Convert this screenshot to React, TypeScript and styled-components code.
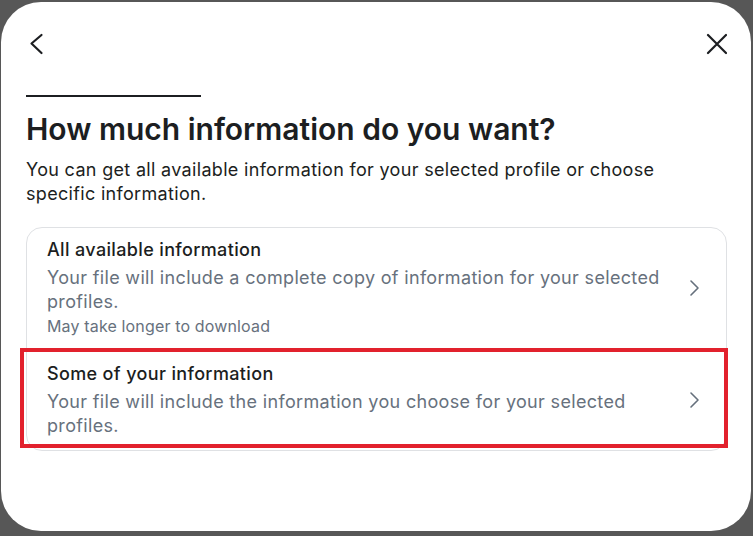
import React from "react";
import styled, { createGlobalStyle } from "styled-components";

const GlobalStyle = createGlobalStyle`
  html, body {
    margin: 0;
    padding: 0;
    background: #575757;
  }
  body {
    font-family: Inter, "Noto Sans", "Liberation Sans", sans-serif;
    -webkit-font-smoothing: antialiased;
  }
`;

interface Choice {
  id: string;
  title: string;
  description: string;
  note?: string;
  highlighted?: boolean;
}

const choices: Choice[] = [
  {
    id: "all",
    title: "All available information",
    description: "Your file will include a complete copy of information for your selected profiles.",
    note: "May take longer to download",
  },
  {
    id: "some",
    title: "Some of your information",
    description: "Your file will include the information you choose for your selected profiles.",
    highlighted: true,
  },
];

const ChevronLeft = () => (
  <svg width="24" height="24" viewBox="0 0 24 24" fill="none">
    <path d="M15.5 4 5.5 12.5l10 9.5" stroke="#1c1e21" strokeWidth="2.2" strokeLinecap="round" strokeLinejoin="round" />
  </svg>
);

const CloseIcon = () => (
  <svg width="24" height="24" viewBox="0 0 24 24" fill="none">
    <path d="M5 4l18 18M23 4 5 22" stroke="#1c1e21" strokeWidth="2.2" strokeLinecap="round" />
  </svg>
);

const ChevronRight = () => (
  <svg width="12" height="18" viewBox="0 0 12 18" fill="none">
    <path d="M3 2l7 7-7 7" stroke="#65707c" strokeWidth="1.6" strokeLinecap="round" strokeLinejoin="round" />
  </svg>
);

function App() {
  return (
    <Style.Backdrop>
      <GlobalStyle />
      <Style.Modal>
        <Style.Header>
          <Style.IconButton aria-label="Back">
            <ChevronLeft />
          </Style.IconButton>
          <Style.IconButton aria-label="Close">
            <CloseIcon />
          </Style.IconButton>
        </Style.Header>

        <Style.Rule />
        <Style.Title>How much information do you want?</Style.Title>
        <Style.Lead>
          You can get all available information for your selected profile or choose specific information.
        </Style.Lead>

        <Style.Card>
          {choices.map((choice) => (
            <Style.Option key={choice.id}>
              <Style.OptionText>
                <Style.OptionTitle>{choice.title}</Style.OptionTitle>
                <Style.OptionDesc>{choice.description}</Style.OptionDesc>
                {choice.note && <Style.OptionNote>{choice.note}</Style.OptionNote>}
              </Style.OptionText>
              <Style.Chevron>
                <ChevronRight />
              </Style.Chevron>
              {choice.highlighted && <Style.Highlight />}
            </Style.Option>
          ))}
        </Style.Card>
      </Style.Modal>
    </Style.Backdrop>
  );
}

const Style = {
  Backdrop: styled.div`
    width: 753px;
    height: 536px;
    box-sizing: border-box;
    padding: 2px 2px 5px 1px;
  `,
  Modal: styled.div`
    height: 100%;
    box-sizing: border-box;
    background: #ffffff;
    border-radius: 40px;
    padding: 29px 24px 0 25px;
    display: flex;
    flex-direction: column;
  `,
  Header: styled.div`
    display: flex;
    justify-content: space-between;
    align-items: center;
    height: 24px;
  `,
  IconButton: styled.button`
    border: none;
    background: none;
    padding: 0;
    width: 24px;
    height: 24px;
    display: flex;
    align-items: center;
    justify-content: center;
    cursor: pointer;
  `,
  Rule: styled.div`
    width: 175px;
    height: 2px;
    background: #1c1e21;
    margin-top: 40px;
  `,
  Title: styled.h1`
    margin: 14px 0 0;
    font-size: 30px;
    line-height: 36px;
    font-weight: 600;
    color: #1c1e21;
  `,
  Lead: styled.p`
    margin: 11px 0 0;
    font-size: 18px;
    line-height: 24px;
    letter-spacing: 0.32px;
    color: #1c1e21;
    max-width: 680px;
  `,
  Card: styled.div`
    margin-top: 21px;
    border: 1px solid #dfe1e4;
    border-radius: 16px;
    display: flex;
    flex-direction: column;
    gap: 2px;
  `,
  Option: styled.div`
    position: relative;
    display: flex;
    align-items: center;
    padding: 10px 20px 12px 20px;
    cursor: pointer;
  `,
  OptionText: styled.div`
    flex: 1;
    display: flex;
    flex-direction: column;
  `,
  OptionTitle: styled.div`
    font-size: 18px;
    line-height: 24px;
    font-weight: 500;
    letter-spacing: 0.35px;
    color: #1c1e21;
    margin-bottom: 4px;
  `,
  OptionDesc: styled.div`
    font-size: 18px;
    line-height: 24px;
    letter-spacing: 0.33px;
    color: #67717d;
    max-width: 625px;
  `,
  OptionNote: styled.div`
    font-size: 16px;
    line-height: 24px;
    letter-spacing: 0.15px;
    color: #67717d;
  `,
  Chevron: styled.div`
    width: 24px;
    display: flex;
    justify-content: center;
    margin-left: 16px;
  `,
  Highlight: styled.div`
    position: absolute;
    left: -7px;
    right: -2px;
    top: -4px;
    bottom: 2px;
    border: 4px solid #e2212d;
    pointer-events: none;
  `,
};

export default App;
